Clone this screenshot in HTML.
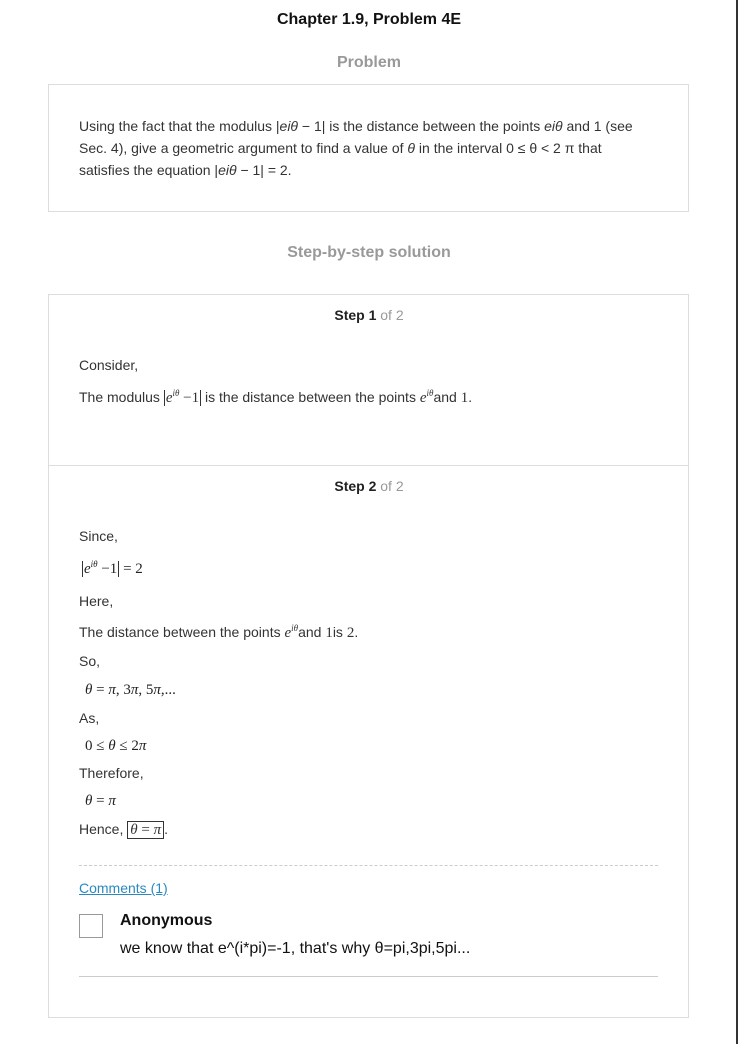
<!DOCTYPE html>
<html><head><style>
body{margin:0;width:738px;height:1044px;background:#fff;position:relative;font-family:"Liberation Sans",Arial,sans-serif;color:#222;overflow:hidden}
.a{position:absolute;white-space:nowrap}
.t{font-size:14px;color:#333}
.m{font-family:"Liberation Serif",serif;font-size:15px}
.i{font-style:italic}
.box{position:absolute;border:1px solid #ddd;box-sizing:border-box}
.h{font-weight:bold;color:#999;font-size:16px}
sup{font-size:9px}
</style></head><body>
<div style="position:absolute;left:736px;top:0;width:2px;height:1044px;background:#333"></div>
<div class="a" style="left:0;width:738px;text-align:center;top:11px;font-weight:bold;font-size:16px;color:#111">Chapter 1.9, Problem 4E</div>
<div class="a h" style="left:0;width:738px;text-align:center;top:54px">Problem</div>
<div class="box" style="left:48px;top:84px;width:641px;height:128px"></div>
<div class="a t" style="left:79px;top:115px;line-height:22px">Using the fact that the modulus |<i>eiθ</i> − 1| is the distance between the points <i>eiθ</i> and 1 (see<br>Sec. 4), give a geometric argument to find a value of <i>θ</i> in the interval 0 ≤ θ &lt; 2 π that<br>satisfies the equation |<i>eiθ</i> − 1| = 2.</div>
<div class="a h" style="left:0;width:738px;text-align:center;top:244px">Step-by-step solution</div>
<div class="box" style="left:48px;top:294px;width:641px;height:724px"></div>
<div style="position:absolute;left:49px;top:465px;width:639px;height:1px;background:#ddd"></div>
<div class="a" style="left:0;width:738px;text-align:center;top:307px;font-size:14px;font-weight:bold;color:#222">Step 1 <span style="font-weight:normal;color:#999">of 2</span></div>
<div class="a t" style="left:79px;top:357px">Consider,</div>
<div class="a t" style="left:79px;top:388px">The modulus <span class="m" style="border-left:1px solid #333;border-right:1px solid #333;padding:0 1px"><i>e</i><sup class="i">iθ</sup> −1</span> is the distance between the points <span class="m"><i>e</i><sup class="i">iθ</sup></span>and <span class="m">1</span>.</div>
<div class="a" style="left:0;width:738px;text-align:center;top:478px;font-size:14px;font-weight:bold;color:#222">Step 2 <span style="font-weight:normal;color:#999">of 2</span></div>
<div class="a t" style="left:79px;top:528px">Since,</div>
<div class="a m" style="left:82px;top:559px"><span style="border-left:1px solid #333;border-right:1px solid #333;padding:0 1px"><i>e</i><sup class="i">iθ</sup> −1</span> = 2</div>
<div class="a t" style="left:79px;top:593px">Here,</div>
<div class="a t" style="left:79px;top:623px">The distance between the points <span class="m"><i>e</i><sup class="i">iθ</sup></span>and <span class="m">1</span>is <span class="m">2</span>.</div>
<div class="a t" style="left:79px;top:653px">So,</div>
<div class="a m" style="left:85px;top:682px"><i>θ</i> = <i>π</i>, 3<i>π</i>, 5<i>π</i>,...</div>
<div class="a t" style="left:79px;top:710px">As,</div>
<div class="a m" style="left:85px;top:738px">0 ≤ <i>θ</i> ≤ 2<i>π</i></div>
<div class="a t" style="left:79px;top:765px">Therefore,</div>
<div class="a m" style="left:85px;top:793px"><i>θ</i> = <i>π</i></div>
<div class="a t" style="left:79px;top:821px">Hence, <span class="m" style="border:1px solid #333;padding:0 2px"><i>θ</i> = <i>π</i></span>.</div>
<div style="position:absolute;left:79px;top:865px;width:579px;border-top:1px dashed #ccc"></div>
<div class="a" style="left:79px;top:880px;font-size:14px;color:#2a8ac0;text-decoration:underline">Comments (1)</div>
<div style="position:absolute;left:79px;top:914px;width:22px;height:22px;border:1px solid #999"></div>
<div class="a" style="left:120px;top:912px;font-size:16px;font-weight:bold;color:#111">Anonymous</div>
<div class="a" style="left:120px;top:940px;font-size:16px;color:#111">we know that e^(i*pi)=-1, that's why θ=pi,3pi,5pi...</div>
<div style="position:absolute;left:79px;top:976px;width:579px;height:1px;background:#ccc"></div>
</body></html>
